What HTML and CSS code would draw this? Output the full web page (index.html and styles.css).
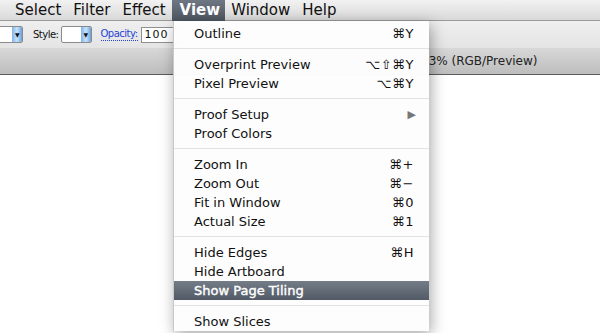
FILE: index.html
```html
<!DOCTYPE html>
<html lang="en">
<head>
  <meta charset="UTF-8" />
  <title>View menu</title>
  <link rel="stylesheet" href="styles.css">
</head>
<body>

  <!-- Menu Bar -->
  <div class="menubar">
    <span class="menu-title">Select</span>
    <span class="menu-title">Filter</span>
    <span class="menu-title">Effect</span>
    <span class="menu-title open">View</span>
    <span class="menu-title">Window</span>
    <span class="menu-title">Help</span>
  </div>

  <!-- Control Bar -->
  <div class="toolbar">
    <div class="dropdown first"><span class="field"></span><span class="arrow">&#9660;</span></div>
    <span class="label">Style:</span>
    <div class="dropdown"><span class="field"></span><span class="arrow">&#9660;</span></div>
    <span class="label link">Opacity:</span>
    <div class="input">100</div>
  </div>

  <!-- Document Tab -->
  <div class="docbar">
    <span class="doc-title">33% (RGB/Preview)</span>
  </div>

  <div class="canvas"></div>

  <!-- View Menu -->
  <div class="menu">
    <div class="item"><span>Outline</span><span class="key">&#8984;Y</span></div>
    <div class="sep"></div>
    <div class="item"><span>Overprint Preview</span><span class="key">&#8997;&#8679;&#8984;Y</span></div>
    <div class="item"><span>Pixel Preview</span><span class="key">&#8997;&#8984;Y</span></div>
    <div class="sep"></div>
    <div class="item"><span>Proof Setup</span><span class="sub">&#9654;</span></div>
    <div class="item"><span>Proof Colors</span></div>
    <div class="sep"></div>
    <div class="item"><span>Zoom In</span><span class="key">&#8984;+</span></div>
    <div class="item"><span>Zoom Out</span><span class="key">&#8984;&#8722;</span></div>
    <div class="item"><span>Fit in Window</span><span class="key">&#8984;0</span></div>
    <div class="item"><span>Actual Size</span><span class="key">&#8984;1</span></div>
    <div class="sep"></div>
    <div class="item"><span>Hide Edges</span><span class="key">&#8984;H</span></div>
    <div class="item"><span>Hide Artboard</span></div>
    <div class="item active"><span>Show Page Tiling</span></div>
    <div class="sep"></div>
    <div class="item"><span>Show Slices</span></div>
  </div>

</body>
</html>
```

FILE: styles.css
```css
body {
  margin: 0;
  width: 600px;
  height: 333px;
  overflow: hidden;
  background-color: white;
  font-family: "DejaVu Sans", "Lucida Grande", sans-serif;
  position: relative;
}
.menubar {
  height: 20px;
  display: flex;
  align-items: center;
  padding-left: 9px;
  background: linear-gradient(#f2f2f2, #d9d9d9);
  border-bottom: 1px solid #9a9a9a;
  font-size: 15px;
  color: #111;
}
.menu-title {
  padding: 0 6px;
  height: 21px;
  line-height: 21px;
}
.menu-title.open {
  margin: 0 0 -1px;
  background: linear-gradient(#6f7782, #4d5560);
  color: white;
  font-weight: bold;
  padding: 0 5px 0 8px;
}
.toolbar {
  height: 27px;
  display: flex;
  align-items: center;
  background: linear-gradient(#efefef, #e4e4e4);
  font-size: 10px;
  letter-spacing: -0.5px;
  color: #111;
}
.dropdown {
  display: flex;
  height: 15px;
  border: 1px solid #8a8a8a;
  border-radius: 2px;
  overflow: hidden;
  background: white;
}
.dropdown .field {
  width: 19px;
}
.dropdown.first {
  margin-left: -8px;
  margin-right: 10px;
}
.dropdown .arrow {
  width: 10px;
  font-size: 6px;
  line-height: 15px;
  text-align: center;
  color: #111;
  background: linear-gradient(90deg, #7fb4ea, #c8e2fb 50%, #6aa2dc);
}
.label {
  margin-right: 2px;
}
.label.link {
  margin-left: 9px;
  color: #2443d6;
  border-bottom: 1px dotted #2443d6;
  line-height: 12px;
  margin-right: 3px;
}
.input {
  width: 44px;
  height: 14px;
  padding-left: 3px;
  border: 1px solid #8f8f8f;
  background: white;
  font-size: 11px;
  line-height: 14px;
  letter-spacing: 1px;
}
.docbar {
  height: 26px;
  display: flex;
  align-items: center;
  padding-left: 421px;
  background: linear-gradient(#d8d8d8, #bdbdbd);
  border-bottom: 1px solid #5c5c5c;
  font-size: 12px;
  color: #222;
}
.menu {
  position: absolute;
  top: 21px;
  left: 173px;
  width: 255px;
  padding-top: 3px;
  background: rgba(253, 253, 253, 0.98);
  border-left: 1px solid #c8c8c8;
  box-shadow: 2px 4px 14px rgba(0, 0, 0, 0.35);
  font-size: 13px;
  color: #111;
  z-index: 10;
}
.item {
  height: 19px;
  display: flex;
  align-items: center;
  justify-content: space-between;
  padding: 0 15px 0 20px;
}
.item .key {
  letter-spacing: 0.5px;
}
.item .sub {
  font-size: 11px;
  color: #777;
  margin-right: -2px;
}
.item.active {
  background: linear-gradient(#747c87, #525a65);
  color: white;
  -webkit-text-stroke: 0.4px white;
}
.sep {
  height: 1px;
  margin: 5px 0 6px;
  background: #e2e2e2;
}
```
